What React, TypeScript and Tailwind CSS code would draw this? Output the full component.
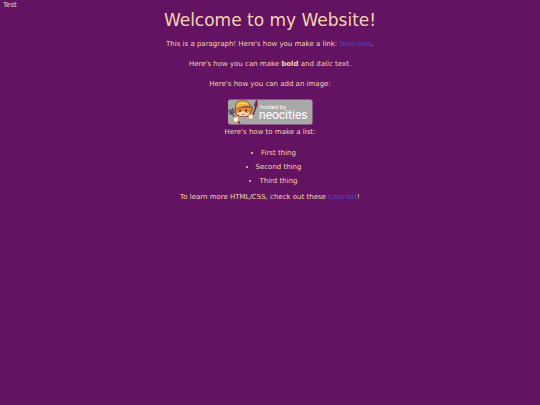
import type { ReactNode } from "react";

function TextLink({ href, children }: { href: string; children: ReactNode }) {
  return (
    <a href={href} className="text-[#5342cc]">
      {children}
    </a>
  );
}

function NeocitiesBadge() {
  return (
    <svg viewBox="0 0 85 26" className="h-[26px] w-[85px]" role="img" aria-label="Hosted by Neocities">
      <rect x="0" y="0.5" width="84.5" height="25" rx="2.5" fill="#a9a8a9" />
      {/* fork */}
      <g stroke="#3f3f55" strokeWidth="1.2" fill="none" strokeLinecap="round">
        <path d="M1 11 L2 14.5 Q4 16 5.5 13.5 L4.5 9.5 M2.8 10.5 L4 14.5 L8 20" />
      </g>
      {/* brush */}
      <path d="M28 8 L25 16" stroke="#5d2b35" strokeWidth="1.4" />
      <path d="M26.4 6.5 L28.6 1 L29.4 5.5 L28 8.5 Z" fill="#a32335" stroke="#4a2030" strokeWidth="0.7" />
      {/* cat */}
      <path d="M8 8 L6.8 13 Q8 17 15 17.5 Q21 18 23 14 L24.5 8 L21 8 Z" fill="#e9883a" stroke="#5b3325" strokeWidth="0.8" />
      <path d="M8.5 14 L12 13.5 L15 12 L18 14 L22 13.5 Q20 17.3 15.5 17.2 Q10 17 8.5 14 Z" fill="#fbe3c8" />
      <path d="M7.5 8 Q7 3.5 12 2 Q18 0.5 21 4.5 L22.5 7.5 Q18 6.5 14 8 Q10 9.5 7 9.5 Z" fill="#eeb43a" stroke="#7d5128" strokeWidth="0.8" />
      <path d="M10 5 Q14 3 19 5" stroke="#fbdc78" strokeWidth="1" fill="none" />
      <ellipse cx="12" cy="11.8" rx="0.8" ry="1.2" fill="#40272a" />
      <ellipse cx="18.2" cy="11.5" rx="0.8" ry="1.2" fill="#40272a" />
      <path d="M13.5 15 Q15.3 16.5 17 14.8" stroke="#8a3532" strokeWidth="0.8" fill="none" />
      <circle cx="8" cy="20.5" r="2.9" fill="#fff1df" stroke="#c8783c" strokeWidth="0.8" />
      <circle cx="22.8" cy="17.8" r="2.7" fill="#fff1df" stroke="#c8783c" strokeWidth="0.8" />
      <path d="M10 22.5 L12 24.5" stroke="#3d2830" strokeWidth="1.3" />
      <g fill="#fff" className="font-['Roboto',sans-serif]">
        <text x="32" y="10" className="text-[6px]">hosted by</text>
        <text x="31" y="20" className="text-[12px]">neocities</text>
      </g>
    </svg>
  );
}

export default function App() {
  return (
    <div className="min-h-screen bg-[#631361] px-[3px] font-['DejaVu_Sans',sans-serif] text-[7px] leading-[10px] text-[#f5d5b0]">
      <div>Test</div>
      <main className="text-center">
        <h1 className="text-[17px] leading-[20px]">Welcome to my Website!</h1>
        <p className="mt-[9px]">
          This is a paragraph! Here's how you make a link:{" "}
          <TextLink href="https://neocities.org">Neocities</TextLink>.
        </p>
        <p className="mt-[10px]">
          Here's how you can make <strong>bold</strong> and <em>italic</em> text.
        </p>
        <p className="mt-[10px]">Here's how you can add an image:</p>
        <div className="mt-[10px] flex justify-center">
          <NeocitiesBadge />
        </div>
        <p className="mt-[2px]">Here's how to make a list:</p>
        <ul className="mt-[9px] list-inside list-disc pl-[7px] leading-[14px]">
          <li>First thing</li>
          <li>Second thing</li>
          <li>Third thing</li>
        </ul>
        <p className="mt-[4px]">
          To learn more HTML/CSS, check out these{" "}
          <TextLink href="https://neocities.org/tutorials">tutorials</TextLink>!
        </p>
      </main>
    </div>
  );
}
